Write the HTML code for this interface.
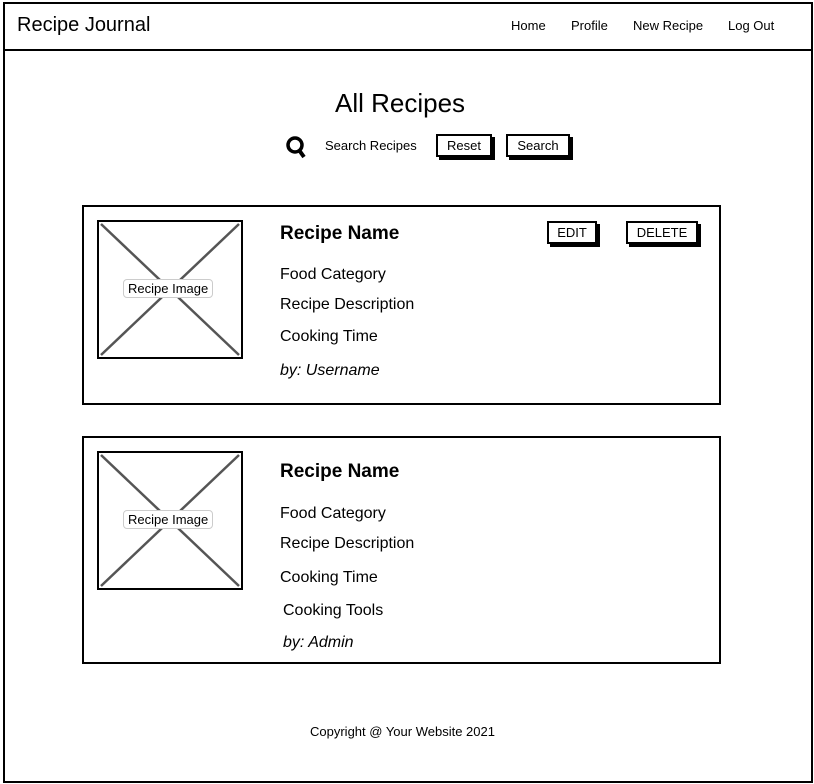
<!DOCTYPE html>
<html><head><style>
body{margin:0;width:814px;height:784px;background:#fff;font-family:"Liberation Sans",sans-serif;color:#000;position:relative;overflow:hidden}
.a{position:absolute;white-space:nowrap}
.box{position:absolute;border:2px solid #000;box-sizing:border-box}
.btn{position:absolute;border:2px solid #000;box-sizing:border-box;background:#fff;box-shadow:3px 3px 0 #000;font-size:13px;text-align:center}
.t{font-size:16px}
.lbl{position:absolute;font-size:13px;background:#fff;border:1px solid #ccc;border-radius:4px;padding:1px 4px}
</style></head><body>
<div class="box" style="left:3px;top:2px;width:810px;height:781px"></div>
<div class="a" style="left:3px;top:49px;width:810px;height:2px;background:#000"></div>
<div class="a" style="left:17px;top:14px;font-size:20px">Recipe Journal</div>
<div class="a" style="left:511px;top:18px;font-size:13px">Home</div>
<div class="a" style="left:571px;top:18px;font-size:13px">Profile</div>
<div class="a" style="left:633px;top:18px;font-size:13px">New Recipe</div>
<div class="a" style="left:728px;top:18px;font-size:13px">Log Out</div>
<div class="a" style="left:335px;top:88px;font-size:26px">All Recipes</div>
<svg class="a" style="left:285px;top:135px" width="24" height="24"><circle cx="10" cy="10" r="7" fill="none" stroke="#000" stroke-width="3.5"/><line x1="14" y1="15" x2="19" y2="22" stroke="#000" stroke-width="4"/></svg>
<div class="a" style="left:325px;top:138px;font-size:13px">Search Recipes</div>
<div class="btn" style="left:436px;top:134px;width:56px;height:23px;line-height:19px">Reset</div>
<div class="btn" style="left:506px;top:134px;width:64px;height:23px;line-height:19px">Search</div>

<div class="box" style="left:82px;top:205px;width:639px;height:200px"></div>
<svg class="a" style="left:97px;top:220px" width="146" height="139"><rect x="1" y="1" width="144" height="137" fill="none" stroke="#000" stroke-width="2"/><line x1="4" y1="4" x2="142" y2="135" stroke="#555" stroke-width="2.5"/><line x1="142" y1="4" x2="4" y2="135" stroke="#555" stroke-width="2.5"/></svg>
<div class="a lbl" style="left:123px;top:279px">Recipe Image</div>
<div class="a" style="left:280px;top:223px;font-size:19px;font-weight:bold">Recipe Name</div>
<div class="a t" style="left:280px;top:266px">Food Category</div>
<div class="a t" style="left:280px;top:296px">Recipe Description</div>
<div class="a t" style="left:280px;top:328px">Cooking Time</div>
<div class="a t" style="left:280px;top:362px;font-style:italic">by: Username</div>
<div class="btn" style="left:547px;top:221px;width:50px;height:23px;line-height:19px">EDIT</div>
<div class="btn" style="left:626px;top:221px;width:72px;height:23px;line-height:19px">DELETE</div>

<div class="box" style="left:82px;top:436px;width:639px;height:228px"></div>
<svg class="a" style="left:97px;top:451px" width="146" height="139"><rect x="1" y="1" width="144" height="137" fill="none" stroke="#000" stroke-width="2"/><line x1="4" y1="4" x2="142" y2="135" stroke="#555" stroke-width="2.5"/><line x1="142" y1="4" x2="4" y2="135" stroke="#555" stroke-width="2.5"/></svg>
<div class="a lbl" style="left:123px;top:510px">Recipe Image</div>
<div class="a" style="left:280px;top:461px;font-size:19px;font-weight:bold">Recipe Name</div>
<div class="a t" style="left:280px;top:505px">Food Category</div>
<div class="a t" style="left:280px;top:535px">Recipe Description</div>
<div class="a t" style="left:280px;top:569px">Cooking Time</div>
<div class="a t" style="left:283px;top:602px">Cooking Tools</div>
<div class="a t" style="left:283px;top:634px;font-style:italic">by: Admin</div>

<div class="a" style="left:310px;top:724px;font-size:13px">Copyright @ Your Website 2021</div>
</body></html>
